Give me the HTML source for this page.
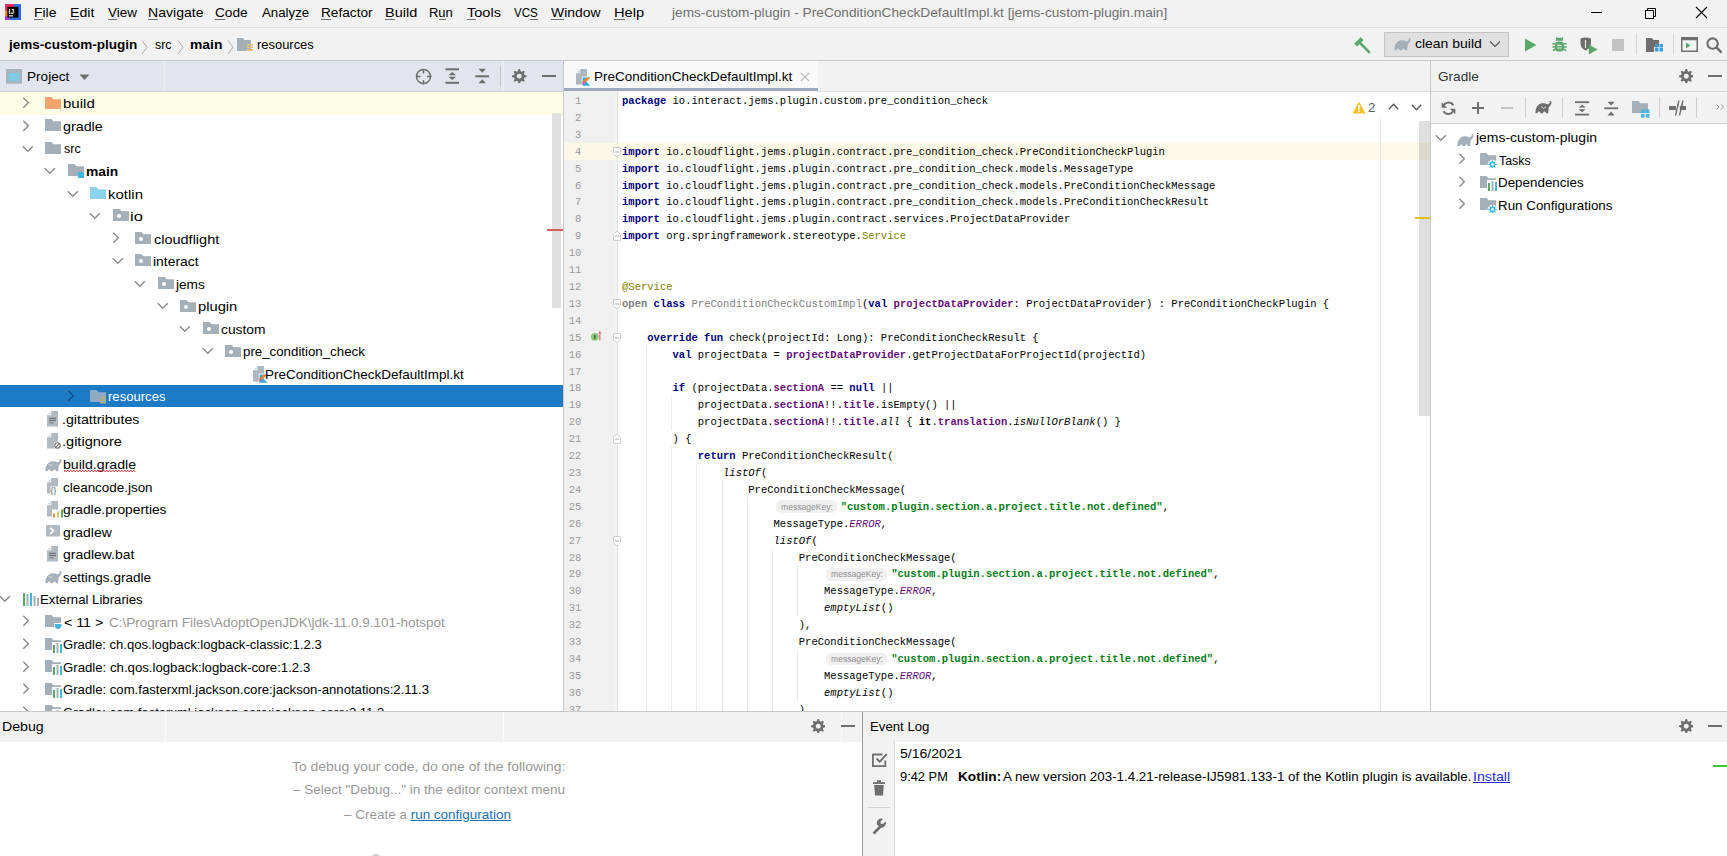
<!DOCTYPE html><html><head><meta charset="utf-8"><style>
html,body{margin:0;padding:0}
body{width:1727px;height:856px;overflow:hidden;position:relative;background:#f2f2f2;font-family:"Liberation Sans",sans-serif}
body div, body svg{position:absolute}
.t{white-space:pre}
.c{position:absolute;white-space:pre;font-family:"Liberation Mono",monospace;font-size:10.5px;line-height:10.5px;color:#000;letter-spacing:0.012px}
.kw{color:#000080;font-weight:bold}
.gr{color:#808080}
.pp{color:#660e7a;font-weight:bold}
.fl{color:#660e7a}
.an{color:#808000}
.st{color:#067d17;font-weight:bold}
.it{font-style:italic}
.en{color:#660e7a;font-style:italic}
.b{font-weight:bold}
</style></head><body>

<div style="left:0px;top:0px;width:1727px;height:27px;background:#f2f2f2;"></div>
<div style="left:0px;top:27px;width:1727px;height:1px;background:#dcdcdc;"></div>
<svg style="left:5px;top:4px" width="16" height="16" viewBox="0 0 16 16"><rect width="16" height="16" fill="#2f6ee8"/><path d="M0 0H9V4.5H4.5V11H0Z" fill="#ec2a5c"/><rect x="0" y="6.5" width="3" height="5.5" fill="#f5821f"/><path d="M0 12H3.5L5 16H0Z" fill="#b03ac6"/><rect x="2.4" y="2.8" width="11" height="10.8" fill="#000"/><text x="3.6" y="9.6" font-family="Liberation Sans" font-weight="bold" font-size="6.8" fill="#fff">IJ</text><rect x="3.8" y="11.2" width="4.2" height="1.3" fill="#ddd"/></svg>
<div class="t" style="left:34.45px;top:6.28px;font-size:13.6px;line-height:13.6px;color:#000;font-weight:normal;transform:scaleX(1.0250);transform-origin:0 0;">File</div>
<div style="left:34px;top:18.5px;width:9px;height:1.2px;background:#707070;"></div>
<div class="t" style="left:69.83px;top:6.28px;font-size:13.6px;line-height:13.6px;color:#000;font-weight:normal;transform:scaleX(1.0404);transform-origin:0 0;">Edit</div>
<div style="left:70px;top:18.5px;width:9px;height:1.2px;background:#707070;"></div>
<div class="t" style="left:107.73px;top:6.28px;font-size:13.6px;line-height:13.6px;color:#000;font-weight:normal;transform:scaleX(0.9895);transform-origin:0 0;">View</div>
<div style="left:108px;top:18.5px;width:9px;height:1.2px;background:#707070;"></div>
<div class="t" style="left:148.24px;top:6.28px;font-size:13.6px;line-height:13.6px;color:#000;font-weight:normal;transform:scaleX(1.0356);transform-origin:0 0;">Navigate</div>
<div style="left:148px;top:18.5px;width:10px;height:1.2px;background:#707070;"></div>
<div class="t" style="left:215.42px;top:6.28px;font-size:13.6px;line-height:13.6px;color:#000;font-weight:normal;transform:scaleX(1.0049);transform-origin:0 0;">Code</div>
<div style="left:215px;top:18.5px;width:10px;height:1.2px;background:#707070;"></div>
<div class="t" style="left:262.17px;top:6.28px;font-size:13.6px;line-height:13.6px;color:#000;font-weight:normal;transform:scaleX(0.9755);transform-origin:0 0;">Analyze</div>
<div style="left:295px;top:18.5px;width:7px;height:1.2px;background:#707070;"></div>
<div class="t" style="left:320.57px;top:6.28px;font-size:13.6px;line-height:13.6px;color:#000;font-weight:normal;transform:scaleX(1.0044);transform-origin:0 0;">Refactor</div>
<div style="left:321px;top:18.5px;width:10px;height:1.2px;background:#707070;"></div>
<div class="t" style="left:385.30px;top:6.28px;font-size:13.6px;line-height:13.6px;color:#000;font-weight:normal;transform:scaleX(1.0653);transform-origin:0 0;">Build</div>
<div style="left:385px;top:18.5px;width:10px;height:1.2px;background:#707070;"></div>
<div class="t" style="left:429.33px;top:6.28px;font-size:13.6px;line-height:13.6px;color:#000;font-weight:normal;transform:scaleX(0.9542);transform-origin:0 0;">Run</div>
<div style="left:439px;top:18.5px;width:7px;height:1.2px;background:#707070;"></div>
<div class="t" style="left:466.87px;top:6.28px;font-size:13.6px;line-height:13.6px;color:#000;font-weight:normal;transform:scaleX(1.0686);transform-origin:0 0;">Tools</div>
<div style="left:467px;top:18.5px;width:9px;height:1.2px;background:#707070;"></div>
<div class="t" style="left:513.74px;top:6.28px;font-size:13.6px;line-height:13.6px;color:#000;font-weight:normal;transform:scaleX(0.8498);transform-origin:0 0;">VCS</div>
<div style="left:530px;top:18.5px;width:8px;height:1.2px;background:#707070;"></div>
<div class="t" style="left:550.83px;top:6.28px;font-size:13.6px;line-height:13.6px;color:#000;font-weight:normal;transform:scaleX(1.0238);transform-origin:0 0;">Window</div>
<div style="left:551px;top:18.5px;width:13px;height:1.2px;background:#707070;"></div>
<div class="t" style="left:613.89px;top:6.28px;font-size:13.6px;line-height:13.6px;color:#000;font-weight:normal;transform:scaleX(1.0806);transform-origin:0 0;">Help</div>
<div style="left:614px;top:18.5px;width:11px;height:1.2px;background:#707070;"></div>
<div class="t" style="left:671.74px;top:6.28px;font-size:13.6px;line-height:13.6px;color:#6f6f6f;font-weight:normal;transform:scaleX(1.0053);transform-origin:0 0;">jems-custom-plugin - PreConditionCheckDefaultImpl.kt [jems-custom-plugin.main]</div>
<div style="left:1591px;top:12px;width:11px;height:1px;background:#000;"></div>
<svg style="left:1643px;top:6px" width="13" height="13" viewBox="0 0 13 13"><path d="M2.5 4.5h8v8h-8z M4.5 4.5v-2h8v8h-2" fill="none" stroke="#000" stroke-width="1"/></svg>
<svg style="left:1695px;top:6px" width="13" height="13" viewBox="0 0 13 13"><path d="M1 1L12 12M12 1L1 12" stroke="#000" stroke-width="1.1"/></svg>
<div style="left:0px;top:60px;width:1727px;height:1px;background:#c9c9c9;"></div>
<div class="t" style="left:8.90px;top:38.38px;font-size:13.6px;line-height:13.6px;color:#000;font-weight:bold;transform:scaleX(0.9939);transform-origin:0 0;">jems-custom-plugin</div>
<svg style="left:141px;top:39.5px" width="7" height="14.5" viewBox="0 0 7 14.5"><path d="M1 0.5L6 7.25L1 14.0" fill="none" stroke="#aaaaaa" stroke-width="1"/></svg>
<div class="t" style="left:154.56px;top:38.38px;font-size:13.6px;line-height:13.6px;color:#000;font-weight:normal;transform:scaleX(0.9152);transform-origin:0 0;">src</div>
<svg style="left:176.5px;top:39.5px" width="7" height="14.5" viewBox="0 0 7 14.5"><path d="M1 0.5L6 7.25L1 14.0" fill="none" stroke="#aaaaaa" stroke-width="1"/></svg>
<div class="t" style="left:189.60px;top:38.38px;font-size:13.6px;line-height:13.6px;color:#000;font-weight:bold;transform:scaleX(1.0193);transform-origin:0 0;">main</div>
<svg style="left:226.5px;top:39.5px" width="7" height="14.5" viewBox="0 0 7 14.5"><path d="M1 0.5L6 7.25L1 14.0" fill="none" stroke="#aaaaaa" stroke-width="1"/></svg>
<svg style="left:237px;top:38px" width="18" height="14" viewBox="0 0 18 14"><path d="M0 0h6l1.5 2H14v11H0z" fill="#a4afb7"/><path d="M10 6h6v1.5h-6zM10 8.5h6V10h-6zM10 11h6v2h-6z" fill="#e4c16a"/></svg>
<div class="t" style="left:256.86px;top:38.38px;font-size:13.6px;line-height:13.6px;color:#000;font-weight:normal;transform:scaleX(0.9513);transform-origin:0 0;">resources</div>
<svg style="left:1353.5px;top:36.5px" width="18" height="17" viewBox="0 0 18 17"><path d="M0.2 6.7L6.7 0.2L9.6 3.1L3.1 9.6Z" fill="#59a869"/><path d="M5.2 5.2L15.8 15.8" stroke="#59a869" stroke-width="2.6"/></svg>
<div style="left:1384px;top:32px;width:125px;height:25px;background:#e0e0e0;box-sizing:border-box;border:1px solid #c4c4c4;"></div>
<svg style="left:1394px;top:37.5px" width="17" height="13" viewBox="0 0 17 13"><path d="M0.5 12.3C0.3 8.5 1.5 4.2 5.5 2.8C8 2 10.5 2.3 12.5 3.5C13.5 2.8 14.8 2.2 15 1.2C15.1 0.6 14.5 0.4 14.1 0.8L13.6 0.5C14.2 -0.3 16.3 -0.2 16.5 1.3C16.6 3 15.2 5 13.8 6.3C13.5 8 13.3 10 13.2 12.3H11C10.8 11 10.2 10.4 9.5 10.4C8.8 10.4 8.2 11 8 12.3H5.5C5.3 11 4.7 10.4 4 10.4C3.3 10.4 2.7 11 2.5 12.3Z" fill="#a4afb7"/></svg>
<div class="t" style="left:1415.41px;top:37.38px;font-size:13.6px;line-height:13.6px;color:#000;font-weight:normal;transform:scaleX(1.0271);transform-origin:0 0;">clean build</div>
<svg style="left:1489px;top:40px" width="12" height="8" viewBox="0 0 12 8"><path d="M1 1.5L6 6.5L11 1.5" fill="none" stroke="#555" stroke-width="1.2"/></svg>
<svg style="left:1524px;top:38px" width="13" height="14" viewBox="0 0 13 14"><path d="M1 0.5L12.5 7L1 13.5z" fill="#59a869"/></svg>
<svg style="left:1552px;top:36.3px" width="15" height="17" viewBox="0 0 15 17"><path d="M4.2 1.5l1.6 1.6M10.8 1.5L9.2 3.1" stroke="#59a869" stroke-width="1.6"/><path d="M3.8 4.8A3.7 3 0 0 1 11.2 4.8z" fill="#59a869"/><rect x="2.8" y="5.6" width="9.4" height="10" rx="4" fill="#59a869"/><path d="M0.3 7.8h2.6M12.1 7.8h2.6M0.3 11h2.6M12.1 11h2.6M0.8 14.6l2.3-1.3M14.2 14.6l-2.3-1.3" stroke="#59a869" stroke-width="1.6"/><path d="M5.3 9.3h4.4M5.3 12h4.4" stroke="#f2f2f2" stroke-width="1.2"/></svg>
<svg style="left:1579.5px;top:36.5px" width="19" height="18" viewBox="0 0 19 18"><path d="M0.5 1.5Q5 -0.5 11 1.5V7Q10 11.5 5.5 13.5Q1 11.5 0.5 7z" fill="#6e6e6e"/><path d="M5.5 3v8" stroke="#f2f2f2" stroke-width="1.1"/><path d="M8.8 7.5l8.8 5-8.8 5z" fill="#59a869"/></svg>
<div style="left:1612px;top:39px;width:12px;height:12px;background:#c2c2c2;"></div>
<div style="left:1636px;top:33px;width:1px;height:22px;background:#d4d4d4;"></div>
<svg style="left:1646px;top:37px" width="18" height="16" viewBox="0 0 18 16"><path d="M0 1h6l1.5 2H13v7H8v5H0z" fill="#6e6e6e"/><rect x="9" y="11" width="3.5" height="3.5" fill="#389fd6"/><rect x="13.5" y="11" width="3.5" height="3.5" fill="#389fd6"/><rect x="9" y="7" width="3.5" height="3.5" fill="#389fd6"/><rect x="13.5" y="7" width="3.5" height="3.5" fill="#389fd6"/></svg>
<div style="left:1673px;top:33px;width:1px;height:22px;background:#d4d4d4;"></div>
<svg style="left:1681px;top:37px" width="17" height="15" viewBox="0 0 17 15"><rect x="0.75" y="0.75" width="15.5" height="13.5" fill="none" stroke="#6e6e6e" stroke-width="1.5"/><rect x="0.75" y="0.75" width="15.5" height="2.5" fill="#6e6e6e"/><path d="M5 5.5l4.5 3-4.5 3z" fill="#59a869"/></svg>
<svg style="left:1706.2px;top:36.8px" width="17" height="17" viewBox="0 0 17 17"><circle cx="6.6" cy="6.6" r="5.2" fill="none" stroke="#6e6e6e" stroke-width="2.1"/><path d="M10.4 10.4L15.6 15.6" stroke="#6e6e6e" stroke-width="2.4"/></svg>
<div style="left:0px;top:61px;width:563px;height:30px;background:#e3e5ee;"></div>
<div style="left:0px;top:91px;width:563px;height:1px;background:#d3d3d6;"></div>
<div style="left:164px;top:61px;width:1px;height:30px;background:#eceef3;"></div>
<div style="left:503px;top:61px;width:1px;height:30px;background:#eceef3;"></div>
<div style="left:564px;top:61px;width:866px;height:30px;background:#f2f2f2;"></div>
<div style="left:564px;top:61px;width:254px;height:27px;background:#f9f9f9;"></div>
<div style="left:564px;top:88px;width:254px;height:3px;background:#9ca8bc;"></div>
<div style="left:818px;top:91px;width:612px;height:1px;background:#dedede;"></div>
<div style="left:1431px;top:61px;width:296px;height:30px;background:#f2f2f2;"></div>
<div style="left:1431px;top:91px;width:296px;height:1px;background:#d8d8d8;"></div>
<svg style="left:6px;top:69.3px" width="16" height="15" viewBox="0 0 16 15"><rect x="0" y="0" width="16" height="14.7" fill="#a9b4bc"/><rect x="2.6" y="4" width="10.8" height="8.2" fill="#7fcbe6"/></svg>
<div class="t" style="left:26.78px;top:70.28px;font-size:13.6px;line-height:13.6px;color:#000;font-weight:normal;transform:scaleX(0.9999);transform-origin:0 0;">Project</div>
<svg style="left:79px;top:74px" width="11" height="7" viewBox="0 0 11 7"><path d="M0.5 0.5h10L5.5 6z" fill="#707070"/></svg>
<svg style="left:415px;top:68px" width="17" height="17" viewBox="0 0 17 17"><circle cx="8.5" cy="8.5" r="7" fill="none" stroke="#6e6e6e" stroke-width="1.5"/><path d="M8.5 1v4.5M8.5 12v4.5M1 8.5h4.5M12 8.5h4.5" stroke="#6e6e6e" stroke-width="1.5"/></svg>
<svg style="left:445px;top:68px" width="15" height="17" viewBox="0 0 15 17"><rect x="0.5" y="0.3" width="13.5" height="2" fill="#6e6e6e"/><rect x="0.5" y="13.8" width="13.5" height="2" fill="#6e6e6e"/><path d="M3.5 7.2L7.25 4 11 7.2zM3.5 8.8L7.25 12 11 8.8z" fill="#6e6e6e"/></svg>
<svg style="left:475px;top:68px" width="15" height="17" viewBox="0 0 15 17"><rect x="0.3" y="7.3" width="13.8" height="2" fill="#6e6e6e"/><path d="M3.5 0.8h7.5L7.25 4.8zM3.5 15.2h7.5L7.25 11.2z" fill="#6e6e6e"/></svg>
<div style="left:500px;top:66px;width:1px;height:21px;background:#c8c8c8;"></div>
<svg style="left:512px;top:68.8px" width="14.5" height="14.5" viewBox="0 0 14.5 14.5"><path d="M6.54 0.03 L7.96 0.03 L8.77 2.25 L9.71 2.65 L11.85 1.65 L12.85 2.65 L11.85 4.79 L12.25 5.73 L14.47 6.54 L14.47 7.96 L12.25 8.77 L11.85 9.71 L12.85 11.85 L11.85 12.85 L9.71 11.85 L8.77 12.25 L7.96 14.47 L6.54 14.47 L5.73 12.25 L4.79 11.85 L2.65 12.85 L1.65 11.85 L2.65 9.71 L2.25 8.77 L0.03 7.96 L0.03 6.54 L2.25 5.73 L2.65 4.79 L1.65 2.65 L2.65 1.65 L4.79 2.65 L5.73 2.25Z" fill="#6e6e6e"/><circle cx="7.25" cy="7.25" r="2.47" fill="#e3e5ee"/></svg>
<div style="left:542px;top:75px;width:14px;height:2px;background:#6e6e6e;"></div>
<svg style="left:576.2px;top:69px" width="16" height="18" viewBox="0 0 16 18"><path d="M4.3 0H11V15.5H0V4.3H4.3z" fill="#aeb7be"/><path d="M0.8 3.5L3.5 0.8V3.5z" fill="#c5ccd2"/><rect x="5.8" y="7.6" width="9.5" height="10" fill="#fff"/><path d="M6.6 8.4H14.2L10.4 12.4L14.2 16.8H6.6z" fill="#35a8e8"/><path d="M10.4 8.4H14.2L6.6 16.2V12.4z" fill="#f0852a"/><path d="M6.6 16.2L9 13.7 6.6 12.4z" fill="#c757bc"/></svg>
<div class="t" style="left:594.39px;top:70.28px;font-size:13.6px;line-height:13.6px;color:#000;font-weight:normal;transform:scaleX(0.9904);transform-origin:0 0;">PreConditionCheckDefaultImpl.kt</div>
<svg style="left:799.5px;top:71.5px" width="10" height="10" viewBox="0 0 10 10"><path d="M0.8 0.8L9.2 9.2M9.2 0.8L0.8 9.2" stroke="#b8b8b8" stroke-width="1.2"/></svg>
<div style="left:1430px;top:61px;width:1px;height:650px;background:#c9c9c9;"></div>
<div class="t" style="left:1437.72px;top:70.18px;font-size:13.6px;line-height:13.6px;color:#333;font-weight:normal;transform:scaleX(1.0015);transform-origin:0 0;">Gradle</div>

<div style="left:0px;top:92px;width:563px;height:619px;background:#ffffff;"></div>
<div style="left:0px;top:92.0px;width:563px;height:22.54px;background:#fefee6;"></div>
<svg style="left:22.099999999999998px;top:97.0px" width="8" height="12" viewBox="0 0 8 12"><path d="M1.3 0.8L6.3 5.8L1.3 10.8" fill="none" stroke="#8c8c8c" stroke-width="1.5"/></svg>
<svg style="left:45.0px;top:96.7px" width="18" height="15" viewBox="0 0 18 15"><path d="M0 0h6.5l2 2.3H16V12H0z" fill="#f4a46f"/></svg>
<div class="t" style="left:62.92px;top:97.38px;font-size:13.6px;line-height:13.6px;color:#000000;font-weight:normal;transform:scaleX(1.1076);transform-origin:0 0;">build</div>
<svg style="left:22.099999999999998px;top:119.53999999999999px" width="8" height="12" viewBox="0 0 8 12"><path d="M1.3 0.8L6.3 5.8L1.3 10.8" fill="none" stroke="#8c8c8c" stroke-width="1.5"/></svg>
<svg style="left:45.0px;top:119.24px" width="18" height="15" viewBox="0 0 18 15"><path d="M0 0h6.5l2 2.3H16V12H0z" fill="#a4afb7"/></svg>
<div class="t" style="left:63.29px;top:119.92px;font-size:13.6px;line-height:13.6px;color:#000000;font-weight:normal;transform:scaleX(1.0514);transform-origin:0 0;">gradle</div>
<svg style="left:21.9px;top:144.57999999999998px" width="12" height="8" viewBox="0 0 12 8"><path d="M0.8 1.3L5.8 6.3L10.8 1.3" fill="none" stroke="#8c8c8c" stroke-width="1.5"/></svg>
<svg style="left:45.0px;top:141.77999999999997px" width="18" height="15" viewBox="0 0 18 15"><path d="M0 0h6.5l2 2.3H16V12H0z" fill="#a4afb7"/></svg>
<div class="t" style="left:63.55px;top:142.46px;font-size:13.6px;line-height:13.6px;color:#000000;font-weight:normal;transform:scaleX(0.9267);transform-origin:0 0;">src</div>
<svg style="left:44.4px;top:167.12px" width="12" height="8" viewBox="0 0 12 8"><path d="M0.8 1.3L5.8 6.3L10.8 1.3" fill="none" stroke="#8c8c8c" stroke-width="1.5"/></svg>
<svg style="left:67.5px;top:164.32px" width="18" height="15" viewBox="0 0 18 15"><path d="M0 0h6.5l2 2.3H16V12H0z" fill="#a4afb7"/><rect x="10" y="8" width="6" height="6" fill="#40b6e0"/></svg>
<div class="t" style="left:86.00px;top:165.00px;font-size:13.6px;line-height:13.6px;color:#000000;font-weight:bold;transform:scaleX(1.0159);transform-origin:0 0;">main</div>
<svg style="left:66.9px;top:189.66px" width="12" height="8" viewBox="0 0 12 8"><path d="M0.8 1.3L5.8 6.3L10.8 1.3" fill="none" stroke="#8c8c8c" stroke-width="1.5"/></svg>
<svg style="left:90.0px;top:186.85999999999999px" width="18" height="15" viewBox="0 0 18 15"><path d="M0 0h6.5l2 2.3H16V12H0z" fill="#8ed3ee"/></svg>
<div class="t" style="left:107.99px;top:187.54px;font-size:13.6px;line-height:13.6px;color:#000000;font-weight:normal;transform:scaleX(1.1017);transform-origin:0 0;">kotlin</div>
<svg style="left:89.4px;top:212.2px" width="12" height="8" viewBox="0 0 12 8"><path d="M0.8 1.3L5.8 6.3L10.8 1.3" fill="none" stroke="#8c8c8c" stroke-width="1.5"/></svg>
<svg style="left:112.5px;top:209.39999999999998px" width="18" height="15" viewBox="0 0 18 15"><path d="M0 0h6.5l2 2.3H16V12H0z" fill="#a4afb7"/><circle cx="6" cy="7" r="2" fill="#fff"/></svg>
<div class="t" style="left:130.29px;top:210.08px;font-size:13.6px;line-height:13.6px;color:#000000;font-weight:normal;transform:scaleX(1.2072);transform-origin:0 0;">io</div>
<svg style="left:112.10000000000001px;top:232.24px" width="8" height="12" viewBox="0 0 8 12"><path d="M1.3 0.8L6.3 5.8L1.3 10.8" fill="none" stroke="#8c8c8c" stroke-width="1.5"/></svg>
<svg style="left:135.0px;top:231.94px" width="18" height="15" viewBox="0 0 18 15"><path d="M0 0h6.5l2 2.3H16V12H0z" fill="#a4afb7"/><circle cx="6" cy="7" r="2" fill="#fff"/></svg>
<div class="t" style="left:153.58px;top:232.62px;font-size:13.6px;line-height:13.6px;color:#000000;font-weight:normal;transform:scaleX(1.0652);transform-origin:0 0;">cloudflight</div>
<svg style="left:111.9px;top:257.28px" width="12" height="8" viewBox="0 0 12 8"><path d="M0.8 1.3L5.8 6.3L10.8 1.3" fill="none" stroke="#8c8c8c" stroke-width="1.5"/></svg>
<svg style="left:135.0px;top:254.48px" width="18" height="15" viewBox="0 0 18 15"><path d="M0 0h6.5l2 2.3H16V12H0z" fill="#a4afb7"/><circle cx="6" cy="7" r="2" fill="#fff"/></svg>
<div class="t" style="left:153.26px;top:255.16px;font-size:13.6px;line-height:13.6px;color:#000000;font-weight:normal;transform:scaleX(1.0209);transform-origin:0 0;">interact</div>
<svg style="left:134.4px;top:279.82px" width="12" height="8" viewBox="0 0 12 8"><path d="M0.8 1.3L5.8 6.3L10.8 1.3" fill="none" stroke="#8c8c8c" stroke-width="1.5"/></svg>
<svg style="left:157.5px;top:277.02px" width="18" height="15" viewBox="0 0 18 15"><path d="M0 0h6.5l2 2.3H16V12H0z" fill="#a4afb7"/><circle cx="6" cy="7" r="2" fill="#fff"/></svg>
<div class="t" style="left:176.34px;top:277.70px;font-size:13.6px;line-height:13.6px;color:#000000;font-weight:normal;transform:scaleX(1.0037);transform-origin:0 0;">jems</div>
<svg style="left:156.9px;top:302.36px" width="12" height="8" viewBox="0 0 12 8"><path d="M0.8 1.3L5.8 6.3L10.8 1.3" fill="none" stroke="#8c8c8c" stroke-width="1.5"/></svg>
<svg style="left:180.0px;top:299.56px" width="18" height="15" viewBox="0 0 18 15"><path d="M0 0h6.5l2 2.3H16V12H0z" fill="#a4afb7"/><circle cx="6" cy="7" r="2" fill="#fff"/></svg>
<div class="t" style="left:198.04px;top:300.24px;font-size:13.6px;line-height:13.6px;color:#000000;font-weight:normal;transform:scaleX(1.0827);transform-origin:0 0;">plugin</div>
<svg style="left:179.4px;top:324.9px" width="12" height="8" viewBox="0 0 12 8"><path d="M0.8 1.3L5.8 6.3L10.8 1.3" fill="none" stroke="#8c8c8c" stroke-width="1.5"/></svg>
<svg style="left:202.5px;top:322.09999999999997px" width="18" height="15" viewBox="0 0 18 15"><path d="M0 0h6.5l2 2.3H16V12H0z" fill="#a4afb7"/><circle cx="6" cy="7" r="2" fill="#fff"/></svg>
<div class="t" style="left:220.91px;top:322.78px;font-size:13.6px;line-height:13.6px;color:#000000;font-weight:normal;transform:scaleX(1.0150);transform-origin:0 0;">custom</div>
<svg style="left:201.9px;top:347.44px" width="12" height="8" viewBox="0 0 12 8"><path d="M0.8 1.3L5.8 6.3L10.8 1.3" fill="none" stroke="#8c8c8c" stroke-width="1.5"/></svg>
<svg style="left:225.0px;top:344.64px" width="18" height="15" viewBox="0 0 18 15"><path d="M0 0h6.5l2 2.3H16V12H0z" fill="#a4afb7"/><circle cx="6" cy="7" r="2" fill="#fff"/></svg>
<div class="t" style="left:243.14px;top:345.32px;font-size:13.6px;line-height:13.6px;color:#000000;font-weight:normal;transform:scaleX(0.9769);transform-origin:0 0;">pre_condition_check</div>
<svg style="left:252.7px;top:365.88px" width="16" height="18" viewBox="0 0 16 18"><path d="M4.3 0H11V15.5H0V4.3H4.3z" fill="#aeb7be"/><path d="M0.8 3.5L3.5 0.8V3.5z" fill="#c5ccd2"/><rect x="5.8" y="7.6" width="9.5" height="10" fill="#fff"/><path d="M6.6 8.4H14.2L10.4 12.4L14.2 16.8H6.6z" fill="#35a8e8"/><path d="M10.4 8.4H14.2L6.6 16.2V12.4z" fill="#f0852a"/><path d="M6.6 16.2L9 13.7 6.6 12.4z" fill="#c757bc"/></svg>
<div class="t" style="left:265.29px;top:367.86px;font-size:13.6px;line-height:13.6px;color:#000000;font-weight:normal;transform:scaleX(0.9924);transform-origin:0 0;">PreConditionCheckDefaultImpl.kt</div>
<div style="left:0px;top:385px;width:563px;height:22px;background:#1d7bc5;"></div>
<svg style="left:67.10000000000001px;top:390.02px" width="8" height="12" viewBox="0 0 8 12"><path d="M1.3 0.8L6.3 5.8L1.3 10.8" fill="none" stroke="#0d4f8c" stroke-width="1.5"/></svg>
<svg style="left:90.0px;top:389.71999999999997px" width="18" height="15" viewBox="0 0 18 15"><path d="M0 0h6.5l2 2.3H16V12H0z" fill="#8ea9c3"/><path d="M10 7h6v1.5h-6zM10 9.5h6V11h-6zM10 12h6v1.5h-6z" fill="#b3b27a"/></svg>
<div class="t" style="left:108.45px;top:390.40px;font-size:13.6px;line-height:13.6px;color:#ffffff;font-weight:normal;transform:scaleX(0.9633);transform-origin:0 0;">resources</div>
<svg style="left:47.2px;top:410.76px" width="12" height="16" viewBox="0 0 12 16"><path d="M4.3 0H11V15.5H0V4.3H4.3z" fill="#b1bac1"/><path d="M0.8 3.5L3.5 0.8V3.5z" fill="#c5ccd2"/><path d="M2 7.3h7M2 9.4h7" stroke="#5f6366" stroke-width="1"/><path d="M2 11.8h4.5" stroke="#7a7f84" stroke-width="1.2"/></svg>
<div class="t" style="left:62.32px;top:412.94px;font-size:13.6px;line-height:13.6px;color:#000000;font-weight:normal;transform:scaleX(1.0458);transform-origin:0 0;">.gitattributes</div>
<svg style="left:47.2px;top:433.29999999999995px" width="16" height="17" viewBox="0 0 16 17"><path d="M4.3 0H11V15.5H0V4.3H4.3z" fill="#b1bac1"/><path d="M0.8 3.5L3.5 0.8V3.5z" fill="#c5ccd2"/><circle cx="10.5" cy="12.5" r="3.8" fill="#fff"/><circle cx="10.5" cy="12.5" r="2.7" fill="none" stroke="#6e6e6e" stroke-width="1.1"/><path d="M8.7 14.3L12.3 10.7" stroke="#6e6e6e" stroke-width="1.1"/></svg>
<div class="t" style="left:62.29px;top:435.48px;font-size:13.6px;line-height:13.6px;color:#000000;font-weight:normal;transform:scaleX(1.0697);transform-origin:0 0;">.gitignore</div>
<svg style="left:44.7px;top:458.53999999999996px" width="17" height="13" viewBox="0 0 17 13"><path d="M0.5 12.3C0.3 8.5 1.5 4.2 5.5 2.8C8 2 10.5 2.3 12.5 3.5C13.5 2.8 14.8 2.2 15 1.2C15.1 0.6 14.5 0.4 14.1 0.8L13.6 0.5C14.2 -0.3 16.3 -0.2 16.5 1.3C16.6 3 15.2 5 13.8 6.3C13.5 8 13.3 10 13.2 12.3H11C10.8 11 10.2 10.4 9.5 10.4C8.8 10.4 8.2 11 8 12.3H5.5C5.3 11 4.7 10.4 4 10.4C3.3 10.4 2.7 11 2.5 12.3Z" fill="#a7b1b9"/><path d="M3.8 5.8Q5 6.8 7 5.8" fill="none" stroke="#fff" stroke-width="0.7"/></svg>
<div class="t" style="left:62.98px;top:458.02px;font-size:13.6px;line-height:13.6px;color:#000000;font-weight:normal;transform:scaleX(1.0399);transform-origin:0 0;">build.gradle</div>
<svg style="left:63.5px;top:469.44px" width="72" height="4" viewBox="0 0 72 4"><path d="M0 3 L0.75 1 L2.25 3 L3.75 1 L5.25 3 L6.75 1 L8.25 3 L9.75 1 L11.25 3 L12.75 1 L14.25 3 L15.75 1 L17.25 3 L18.75 1 L20.25 3 L21.75 1 L23.25 3 L24.75 1 L26.25 3 L27.75 1 L29.25 3 L30.75 1 L32.25 3 L33.75 1 L35.25 3 L36.75 1 L38.25 3 L39.75 1 L41.25 3 L42.75 1 L44.25 3 L45.75 1 L47.25 3 L48.75 1 L50.25 3 L51.75 1 L53.25 3 L54.75 1 L56.25 3 L57.75 1 L59.25 3 L60.75 1 L62.25 3 L63.75 1 L65.25 3 L66.75 1 L68.25 3 L69.75 1 L71.25 3" fill="none" stroke="#e0383e" stroke-width="0.9"/></svg>
<svg style="left:47.2px;top:478.38px" width="16" height="17" viewBox="0 0 16 17"><path d="M4.3 0H11V15.5H0V4.3H4.3z" fill="#b1bac1"/><path d="M0.8 3.5L3.5 0.8V3.5z" fill="#c5ccd2"/><rect x="3.5" y="8.5" width="10" height="8.5" fill="#fff"/><text x="3.6" y="15.6" font-family="Liberation Sans" font-size="8.5" fill="#5a5a5a">{}</text></svg>
<div class="t" style="left:63.03px;top:480.56px;font-size:13.6px;line-height:13.6px;color:#000000;font-weight:normal;transform:scaleX(0.9879);transform-origin:0 0;">cleancode.json</div>
<svg style="left:47.2px;top:500.91999999999996px" width="17" height="17" viewBox="0 0 17 17"><path d="M4.3 0H11V15.5H0V4.3H4.3z" fill="#b1bac1"/><path d="M0.8 3.5L3.5 0.8V3.5z" fill="#c5ccd2"/><rect x="5" y="8.5" width="12" height="8.5" fill="#fff"/><rect x="6" y="12.5" width="2" height="4" fill="#f98b3c"/><rect x="10" y="10.5" width="2" height="6" fill="#e4c16a"/><rect x="14" y="8.5" width="2" height="8" fill="#59a869"/></svg>
<div class="t" style="left:63.31px;top:503.10px;font-size:13.6px;line-height:13.6px;color:#000000;font-weight:normal;transform:scaleX(1.0147);transform-origin:0 0;">gradle.properties</div>
<svg style="left:45.8px;top:525.26px" width="15" height="12" viewBox="0 0 15 12"><rect x="0" y="0" width="14" height="11.5" rx="0.8" fill="#b1bac1"/><path d="M4.2 2.8L7.4 5.8L4.2 8.8" fill="none" stroke="#fff" stroke-width="1.6"/></svg>
<div class="t" style="left:63.31px;top:525.64px;font-size:13.6px;line-height:13.6px;color:#000000;font-weight:normal;transform:scaleX(1.0236);transform-origin:0 0;">gradlew</div>
<svg style="left:47.2px;top:546.0px" width="12" height="16" viewBox="0 0 12 16"><path d="M4.3 0H11V15.5H0V4.3H4.3z" fill="#b1bac1"/><path d="M0.8 3.5L3.5 0.8V3.5z" fill="#c5ccd2"/><path d="M2 7.3h7M2 9.4h7" stroke="#5f6366" stroke-width="1"/><path d="M2 11.8h4.5" stroke="#7a7f84" stroke-width="1.2"/></svg>
<div class="t" style="left:63.31px;top:548.18px;font-size:13.6px;line-height:13.6px;color:#000000;font-weight:normal;transform:scaleX(1.0264);transform-origin:0 0;">gradlew.bat</div>
<svg style="left:44.7px;top:571.24px" width="17" height="13" viewBox="0 0 17 13"><path d="M0.5 12.3C0.3 8.5 1.5 4.2 5.5 2.8C8 2 10.5 2.3 12.5 3.5C13.5 2.8 14.8 2.2 15 1.2C15.1 0.6 14.5 0.4 14.1 0.8L13.6 0.5C14.2 -0.3 16.3 -0.2 16.5 1.3C16.6 3 15.2 5 13.8 6.3C13.5 8 13.3 10 13.2 12.3H11C10.8 11 10.2 10.4 9.5 10.4C8.8 10.4 8.2 11 8 12.3H5.5C5.3 11 4.7 10.4 4 10.4C3.3 10.4 2.7 11 2.5 12.3Z" fill="#a7b1b9"/><path d="M3.8 5.8Q5 6.8 7 5.8" fill="none" stroke="#fff" stroke-width="0.7"/></svg>
<div class="t" style="left:63.03px;top:570.72px;font-size:13.6px;line-height:13.6px;color:#000000;font-weight:normal;transform:scaleX(0.9956);transform-origin:0 0;">settings.gradle</div>
<svg style="left:-0.6000000000000014px;top:595.38px" width="12" height="8" viewBox="0 0 12 8"><path d="M0.8 1.3L5.8 6.3L10.8 1.3" fill="none" stroke="#8c8c8c" stroke-width="1.5"/></svg>
<svg style="left:22.5px;top:592.58px" width="17" height="14" viewBox="0 0 17 14"><rect x="0" y="0" width="2" height="13" fill="#59a869"/><rect x="3.5" y="1" width="2" height="12" fill="#a4afb7"/><rect x="7" y="0" width="2" height="13" fill="#40b6e0"/><rect x="10.5" y="3" width="2" height="10" fill="#a4afb7"/><rect x="14" y="5" width="2" height="8" fill="#a4afb7"/></svg>
<div class="t" style="left:40.21px;top:593.26px;font-size:13.6px;line-height:13.6px;color:#000000;font-weight:normal;transform:scaleX(0.9708);transform-origin:0 0;">External Libraries</div>
<svg style="left:22.099999999999998px;top:615.42px" width="8" height="12" viewBox="0 0 8 12"><path d="M1.3 0.8L6.3 5.8L1.3 10.8" fill="none" stroke="#8c8c8c" stroke-width="1.5"/></svg>
<svg style="left:45.0px;top:615.12px" width="18" height="15" viewBox="0 0 18 15"><path d="M0 0h6.5l2 2.3H16V12H0z" fill="#a4afb7"/><rect x="9" y="8" width="9" height="7" fill="#fff"/><path d="M9.5 9h7c0 3-1.5 5-3.5 5s-3.5-2-3.5-5z" fill="#40b6e0"/></svg>
<div class="t" style="left:63.99px;top:615.80px;font-size:13.6px;line-height:13.6px;color:#000000;font-weight:normal;transform:scaleX(1.0467);transform-origin:0 0;">&lt; 11 &gt;</div>
<div class="t" style="left:108.53px;top:615.80px;font-size:13.6px;line-height:13.6px;color:#999999;font-weight:normal;transform:scaleX(0.9925);transform-origin:0 0;">C:\Program Files\AdoptOpenJDK\jdk-11.0.9.101-hotspot</div>
<svg style="left:22.099999999999998px;top:637.96px" width="8" height="12" viewBox="0 0 8 12"><path d="M1.3 0.8L6.3 5.8L1.3 10.8" fill="none" stroke="#8c8c8c" stroke-width="1.5"/></svg>
<svg style="left:45.0px;top:637.6600000000001px" width="18" height="15" viewBox="0 0 18 15"><path d="M0 0h6.5l2 2.3H16V12H0z" fill="#a4afb7"/><rect x="7" y="4" width="11" height="11" fill="#fff"/><rect x="8" y="7" width="2" height="8" fill="#59a869"/><rect x="11.5" y="5" width="2" height="10" fill="#a4afb7"/><rect x="15" y="6" width="2" height="9" fill="#40b6e0"/></svg>
<div class="t" style="left:62.75px;top:638.34px;font-size:13.6px;line-height:13.6px;color:#000000;font-weight:normal;transform:scaleX(0.9617);transform-origin:0 0;">Gradle: ch.qos.logback:logback-classic:1.2.3</div>
<svg style="left:22.099999999999998px;top:660.5px" width="8" height="12" viewBox="0 0 8 12"><path d="M1.3 0.8L6.3 5.8L1.3 10.8" fill="none" stroke="#8c8c8c" stroke-width="1.5"/></svg>
<svg style="left:45.0px;top:660.2px" width="18" height="15" viewBox="0 0 18 15"><path d="M0 0h6.5l2 2.3H16V12H0z" fill="#a4afb7"/><rect x="7" y="4" width="11" height="11" fill="#fff"/><rect x="8" y="7" width="2" height="8" fill="#59a869"/><rect x="11.5" y="5" width="2" height="10" fill="#a4afb7"/><rect x="15" y="6" width="2" height="9" fill="#40b6e0"/></svg>
<div class="t" style="left:62.74px;top:660.88px;font-size:13.6px;line-height:13.6px;color:#000000;font-weight:normal;transform:scaleX(0.9708);transform-origin:0 0;">Gradle: ch.qos.logback:logback-core:1.2.3</div>
<svg style="left:22.099999999999998px;top:683.04px" width="8" height="12" viewBox="0 0 8 12"><path d="M1.3 0.8L6.3 5.8L1.3 10.8" fill="none" stroke="#8c8c8c" stroke-width="1.5"/></svg>
<svg style="left:45.0px;top:682.74px" width="18" height="15" viewBox="0 0 18 15"><path d="M0 0h6.5l2 2.3H16V12H0z" fill="#a4afb7"/><rect x="7" y="4" width="11" height="11" fill="#fff"/><rect x="8" y="7" width="2" height="8" fill="#59a869"/><rect x="11.5" y="5" width="2" height="10" fill="#a4afb7"/><rect x="15" y="6" width="2" height="9" fill="#40b6e0"/></svg>
<div class="t" style="left:62.74px;top:683.42px;font-size:13.6px;line-height:13.6px;color:#000000;font-weight:normal;transform:scaleX(0.9674);transform-origin:0 0;">Gradle: com.fasterxml.jackson.core:jackson-annotations:2.11.3</div>
<svg style="left:22.099999999999998px;top:705.5799999999999px" width="8" height="12" viewBox="0 0 8 12"><path d="M1.3 0.8L6.3 5.8L1.3 10.8" fill="none" stroke="#8c8c8c" stroke-width="1.5"/></svg>
<svg style="left:45.0px;top:705.28px" width="18" height="15" viewBox="0 0 18 15"><path d="M0 0h6.5l2 2.3H16V12H0z" fill="#a4afb7"/><rect x="7" y="4" width="11" height="11" fill="#fff"/><rect x="8" y="7" width="2" height="8" fill="#59a869"/><rect x="11.5" y="5" width="2" height="10" fill="#a4afb7"/><rect x="15" y="6" width="2" height="9" fill="#40b6e0"/></svg>
<div class="t" style="left:62.75px;top:705.96px;font-size:13.6px;line-height:13.6px;color:#000000;font-weight:normal;transform:scaleX(0.9606);transform-origin:0 0;">Gradle: com.fasterxml.jackson.core:jackson-core:2.11.3</div>
<div style="left:552px;top:113.3px;width:9px;height:194.5px;background:#e0e0e0;"></div>
<div style="left:547px;top:228.5px;width:16px;height:2px;background:#d65c5c;"></div>
<div style="left:563px;top:61px;width:1px;height:650px;background:#c9c9c9;"></div>
<div style="left:564px;top:92px;width:53px;height:619px;background:#f0f0f0;"></div>
<div style="left:615px;top:92px;width:2px;height:619px;background:#f3f3f3;"></div>
<div style="left:617px;top:92px;width:1px;height:619px;background:#e2e2e2;"></div>
<div style="left:618px;top:92px;width:812px;height:619px;background:#ffffff;"></div>
<div style="left:564px;top:142.73000000000002px;width:51px;height:17px;background:#fcf8e6;"></div>
<div style="left:615px;top:142.73000000000002px;width:2px;height:17px;background:#fcf8e6;"></div>
<div style="left:618px;top:142.73000000000002px;width:812px;height:17px;background:#fef9e7;"></div>
<div style="left:1380px;top:119px;width:1px;height:592px;background:#e8e8e8;"></div>
<div style="left:646px;top:345.45px;width:1px;height:372.01000000000005px;background:#ebebeb;"></div>
<div style="left:671px;top:396.18px;width:1px;height:33.81px;background:#ebebeb;"></div>
<div style="left:671px;top:446.91px;width:1px;height:270.55px;background:#ebebeb;"></div>
<div style="left:696px;top:463.82px;width:1px;height:253.64000000000004px;background:#ebebeb;"></div>
<div style="left:722px;top:480.73px;width:1px;height:236.73000000000002px;background:#ebebeb;"></div>
<div style="left:747px;top:497.64000000000004px;width:1px;height:219.82px;background:#ebebeb;"></div>
<div style="left:772px;top:548.3699999999999px;width:1px;height:169.09000000000015px;background:#ebebeb;"></div>
<div style="left:797px;top:565.28px;width:1px;height:50.72000000000003px;background:#ebebeb;"></div>
<div style="left:797px;top:649.8299999999999px;width:1px;height:50.72000000000014px;background:#ebebeb;"></div>
<div class="c" style="left:574.99px;top:95.96px;color:#999999">1</div>
<div class="c" style="left:622.0px;top:95.96px"><span class="kw">package</span> io.interact.jems.plugin.custom.pre_condition_check</div>
<div class="c" style="left:574.99px;top:112.87px;color:#999999">2</div>
<div class="c" style="left:574.99px;top:129.78px;color:#999999">3</div>
<div class="c" style="left:574.99px;top:146.69px;color:#999999">4</div>
<div class="c" style="left:622.0px;top:146.69px"><span class="kw">import</span> io.cloudflight.jems.plugin.contract.pre_condition_check.PreConditionCheckPlugin</div>
<div class="c" style="left:574.99px;top:163.60px;color:#999999">5</div>
<div class="c" style="left:622.0px;top:163.60px"><span class="kw">import</span> io.cloudflight.jems.plugin.contract.pre_condition_check.models.MessageType</div>
<div class="c" style="left:574.99px;top:180.51px;color:#999999">6</div>
<div class="c" style="left:622.0px;top:180.51px"><span class="kw">import</span> io.cloudflight.jems.plugin.contract.pre_condition_check.models.PreConditionCheckMessage</div>
<div class="c" style="left:574.99px;top:197.42px;color:#999999">7</div>
<div class="c" style="left:622.0px;top:197.42px"><span class="kw">import</span> io.cloudflight.jems.plugin.contract.pre_condition_check.models.PreConditionCheckResult</div>
<div class="c" style="left:574.99px;top:214.33px;color:#999999">8</div>
<div class="c" style="left:622.0px;top:214.33px"><span class="kw">import</span> io.cloudflight.jems.plugin.contract.services.ProjectDataProvider</div>
<div class="c" style="left:574.99px;top:231.24px;color:#999999">9</div>
<div class="c" style="left:622.0px;top:231.24px"><span class="kw">import</span> org.springframework.stereotype.<span class="an">Service</span></div>
<div class="c" style="left:568.67px;top:248.15px;color:#999999">10</div>
<div class="c" style="left:568.67px;top:265.06px;color:#999999">11</div>
<div class="c" style="left:568.67px;top:281.97px;color:#999999">12</div>
<div class="c" style="left:622.0px;top:281.97px"><span class="an">@Service</span></div>
<div class="c" style="left:568.67px;top:298.88px;color:#999999">13</div>
<div class="c" style="left:622.0px;top:298.88px"><span class="gr b">open</span> <span class="kw">class</span> <span class="gr">PreConditionCheckCustomImpl</span>(<span class="kw">val</span> <span class="pp">projectDataProvider</span>: ProjectDataProvider) : PreConditionCheckPlugin {</div>
<div class="c" style="left:568.67px;top:315.79px;color:#999999">14</div>
<div class="c" style="left:568.67px;top:332.70px;color:#999999">15</div>
<div class="c" style="left:622.0px;top:332.70px">    <span class="kw">override fun</span> check(projectId: Long): PreConditionCheckResult {</div>
<div class="c" style="left:568.67px;top:349.61px;color:#999999">16</div>
<div class="c" style="left:622.0px;top:349.61px">        <span class="kw">val</span> projectData = <span class="pp">projectDataProvider</span>.getProjectDataForProjectId(projectId)</div>
<div class="c" style="left:568.67px;top:366.52px;color:#999999">17</div>
<div class="c" style="left:568.67px;top:383.43px;color:#999999">18</div>
<div class="c" style="left:622.0px;top:383.43px">        <span class="kw">if</span> (projectData.<span class="pp">sectionA</span> == <span class="kw">null</span> ||</div>
<div class="c" style="left:568.67px;top:400.34px;color:#999999">19</div>
<div class="c" style="left:622.0px;top:400.34px">            projectData.<span class="pp">sectionA</span>!!.<span class="pp">title</span>.isEmpty() ||</div>
<div class="c" style="left:568.67px;top:417.25px;color:#999999">20</div>
<div class="c" style="left:622.0px;top:417.25px">            projectData.<span class="pp">sectionA</span>!!.<span class="pp">title</span>.<span class="it">all</span> { <span class="b">it</span>.<span class="pp">translation</span>.<span class="it">isNullOrBlank</span>() }</div>
<div class="c" style="left:568.67px;top:434.16px;color:#999999">21</div>
<div class="c" style="left:622.0px;top:434.16px">        ) {</div>
<div class="c" style="left:568.67px;top:451.07px;color:#999999">22</div>
<div class="c" style="left:622.0px;top:451.07px">            <span class="kw">return</span> PreConditionCheckResult(</div>
<div class="c" style="left:568.67px;top:467.98px;color:#999999">23</div>
<div class="c" style="left:622.0px;top:467.98px">                <span class="it">listOf</span>(</div>
<div class="c" style="left:568.67px;top:484.89px;color:#999999">24</div>
<div class="c" style="left:622.0px;top:484.89px">                    PreConditionCheckMessage(</div>
<div class="c" style="left:568.67px;top:501.80px;color:#999999">25</div>
<div style="left:775.512px;top:500.34000000000003px;width:61px;height:12.6px;background:#f0f0f0;border-radius:5px;"></div>
<div class="t" style="left:780.53px;top:502.65px;font-size:9.2px;line-height:9.2px;color:#8e8e8e;font-weight:normal;transform:scaleX(0.9340);transform-origin:0 0;">messageKey:</div>
<div class="c" style="left:622.0px;top:501.80px">                        <span style="display:inline-block;width:67.2px;height:0"></span><span class="st">"custom.plugin.section.a.project.title.not.defined"</span>,</div>
<div class="c" style="left:568.67px;top:518.71px;color:#999999">26</div>
<div class="c" style="left:622.0px;top:518.71px">                        MessageType.<span class="en">ERROR</span>,</div>
<div class="c" style="left:568.67px;top:535.62px;color:#999999">27</div>
<div class="c" style="left:622.0px;top:535.62px">                        <span class="it">listOf</span>(</div>
<div class="c" style="left:568.67px;top:552.53px;color:#999999">28</div>
<div class="c" style="left:622.0px;top:552.53px">                            PreConditionCheckMessage(</div>
<div class="c" style="left:568.67px;top:569.44px;color:#999999">29</div>
<div style="left:826.016px;top:567.98px;width:61px;height:12.6px;background:#f0f0f0;border-radius:5px;"></div>
<div class="t" style="left:831.04px;top:570.29px;font-size:9.2px;line-height:9.2px;color:#8e8e8e;font-weight:normal;transform:scaleX(0.9340);transform-origin:0 0;">messageKey:</div>
<div class="c" style="left:622.0px;top:569.44px">                                <span style="display:inline-block;width:67.2px;height:0"></span><span class="st">"custom.plugin.section.a.project.title.not.defined"</span>,</div>
<div class="c" style="left:568.67px;top:586.35px;color:#999999">30</div>
<div class="c" style="left:622.0px;top:586.35px">                                MessageType.<span class="en">ERROR</span>,</div>
<div class="c" style="left:568.67px;top:603.26px;color:#999999">31</div>
<div class="c" style="left:622.0px;top:603.26px">                                <span class="it">emptyList</span>()</div>
<div class="c" style="left:568.67px;top:620.17px;color:#999999">32</div>
<div class="c" style="left:622.0px;top:620.17px">                            ),</div>
<div class="c" style="left:568.67px;top:637.08px;color:#999999">33</div>
<div class="c" style="left:622.0px;top:637.08px">                            PreConditionCheckMessage(</div>
<div class="c" style="left:568.67px;top:653.99px;color:#999999">34</div>
<div style="left:826.016px;top:652.53px;width:61px;height:12.6px;background:#f0f0f0;border-radius:5px;"></div>
<div class="t" style="left:831.04px;top:654.84px;font-size:9.2px;line-height:9.2px;color:#8e8e8e;font-weight:normal;transform:scaleX(0.9340);transform-origin:0 0;">messageKey:</div>
<div class="c" style="left:622.0px;top:653.99px">                                <span style="display:inline-block;width:67.2px;height:0"></span><span class="st">"custom.plugin.section.a.project.title.not.defined"</span>,</div>
<div class="c" style="left:568.67px;top:670.90px;color:#999999">35</div>
<div class="c" style="left:622.0px;top:670.90px">                                MessageType.<span class="en">ERROR</span>,</div>
<div class="c" style="left:568.67px;top:687.81px;color:#999999">36</div>
<div class="c" style="left:622.0px;top:687.81px">                                <span class="it">emptyList</span>()</div>
<div class="c" style="left:568.67px;top:704.72px;color:#999999">37</div>
<div class="c" style="left:622.0px;top:704.72px">                            )</div>
<svg style="left:613px;top:146.83px" width="8" height="10" viewBox="0 0 8 10"><path d="M0.5 0.5h7v6l-3.5 3.5l-3.5-3.5z" fill="#fff" stroke="#cfcfcf" stroke-width="1"/><path d="M2 5h4" stroke="#a8a8a8" stroke-width="1"/></svg>
<svg style="left:613px;top:299.02000000000004px" width="8" height="10" viewBox="0 0 8 10"><path d="M0.5 0.5h7v6l-3.5 3.5l-3.5-3.5z" fill="#fff" stroke="#cfcfcf" stroke-width="1"/><path d="M2 5h4" stroke="#a8a8a8" stroke-width="1"/></svg>
<svg style="left:613px;top:332.84000000000003px" width="8" height="10" viewBox="0 0 8 10"><path d="M0.5 0.5h7v6l-3.5 3.5l-3.5-3.5z" fill="#fff" stroke="#cfcfcf" stroke-width="1"/><path d="M2 5h4" stroke="#a8a8a8" stroke-width="1"/></svg>
<svg style="left:613px;top:535.7600000000001px" width="8" height="10" viewBox="0 0 8 10"><path d="M0.5 0.5h7v6l-3.5 3.5l-3.5-3.5z" fill="#fff" stroke="#cfcfcf" stroke-width="1"/><path d="M2 5h4" stroke="#a8a8a8" stroke-width="1"/></svg>
<svg style="left:613px;top:231.38px" width="8" height="10" viewBox="0 0 8 10"><path d="M0.5 9.5h7v-6l-3.5-3.5l-3.5 3.5z" fill="#fff" stroke="#cfcfcf" stroke-width="1"/><path d="M2 5h4" stroke="#a8a8a8" stroke-width="1"/></svg>
<svg style="left:613px;top:434.3px" width="8" height="10" viewBox="0 0 8 10"><path d="M0.5 9.5h7v-6l-3.5-3.5l-3.5 3.5z" fill="#fff" stroke="#cfcfcf" stroke-width="1"/><path d="M2 5h4" stroke="#a8a8a8" stroke-width="1"/></svg>
<svg style="left:590px;top:330.24px" width="12" height="12" viewBox="0 0 12 12"><circle cx="4.8" cy="6.8" r="3.9" fill="#8dc67f"/><rect x="4" y="5" width="1.5" height="4" fill="#3d6b33"/><path d="M9.8 1.5v9" stroke="#d9757a" stroke-width="1.3"/><path d="M8 3.5l1.8-2.3 1.8 2.3z" fill="#d9757a"/></svg>
<svg style="left:1352px;top:100.5px" width="14" height="13" viewBox="0 0 14 13"><path d="M7 0.5L13.5 12.5H0.5z" fill="#f2c12e"/><rect x="6.2" y="4" width="1.6" height="4.5" fill="#fff"/><rect x="6.2" y="9.5" width="1.6" height="1.6" fill="#fff"/></svg>
<div class="t" style="left:1368.13px;top:100.88px;font-size:13.6px;line-height:13.6px;color:#5a5f6a;font-weight:normal;transform:scaleX(0.9853);transform-origin:0 0;">2</div>
<svg style="left:1388px;top:102.5px" width="11" height="7" viewBox="0 0 11 7"><path d="M0.8 6.2L5.5 1.3L10.2 6.2" fill="none" stroke="#555" stroke-width="1.3"/></svg>
<svg style="left:1411px;top:104px" width="11" height="7" viewBox="0 0 11 7"><path d="M0.8 0.8L5.5 5.7L10.2 0.8" fill="none" stroke="#555" stroke-width="1.3"/></svg>
<div style="left:1419px;top:121px;width:10.5px;height:295px;background:rgba(0,0,0,0.125);"></div>
<div style="left:1415px;top:217px;width:15px;height:2.2px;background:#e3c01c;"></div>
<div style="left:1431px;top:92px;width:296px;height:31px;background:#f2f2f2;"></div>
<div style="left:1431px;top:123px;width:296px;height:1px;background:#d1d1d1;"></div>
<div style="left:1431px;top:124px;width:296px;height:587px;background:#ffffff;"></div>
<svg style="left:1678.5px;top:68.8px" width="14.5" height="14.5" viewBox="0 0 14.5 14.5"><path d="M6.54 0.03 L7.96 0.03 L8.77 2.25 L9.71 2.65 L11.85 1.65 L12.85 2.65 L11.85 4.79 L12.25 5.73 L14.47 6.54 L14.47 7.96 L12.25 8.77 L11.85 9.71 L12.85 11.85 L11.85 12.85 L9.71 11.85 L8.77 12.25 L7.96 14.47 L6.54 14.47 L5.73 12.25 L4.79 11.85 L2.65 12.85 L1.65 11.85 L2.65 9.71 L2.25 8.77 L0.03 7.96 L0.03 6.54 L2.25 5.73 L2.65 4.79 L1.65 2.65 L2.65 1.65 L4.79 2.65 L5.73 2.25Z" fill="#6e6e6e"/><circle cx="7.25" cy="7.25" r="2.47" fill="#f2f2f2"/></svg>
<div style="left:1708px;top:75px;width:14px;height:2px;background:#6e6e6e;"></div>
<svg style="left:1441px;top:100.5px" width="15" height="14.5" viewBox="0 0 15 14.5"><path d="M12.3 4.2A5.6 5.6 0 0 0 2.2 5.3" fill="none" stroke="#6e6e6e" stroke-width="1.8"/><path d="M0.6 1.2v5.6h5.6z" fill="#6e6e6e"/><path d="M2.5 10.3A5.6 5.6 0 0 0 12.6 9.2" fill="none" stroke="#6e6e6e" stroke-width="1.8"/><path d="M14.4 13.3V7.7H8.8z" fill="#6e6e6e"/></svg>
<svg style="left:1472px;top:102px" width="12" height="12" viewBox="0 0 12 12"><path d="M6 0v12M0 6h12" stroke="#6e6e6e" stroke-width="2"/></svg>
<div style="left:1501px;top:107px;width:12px;height:1.8px;background:#c4c4c4;"></div>
<div style="left:1525px;top:97px;width:1px;height:21px;background:#cfcfcf;"></div>
<svg style="left:1535px;top:101px" width="18" height="13" viewBox="0 0 18 13"><path d="M0.5 12.3C0.3 8.5 1.5 4.2 5.5 2.8C8 2 10.5 2.3 12.5 3.5C13.5 2.8 14.8 2.2 15 1.2C15.1 0.6 14.5 0.4 14.1 0.8L13.6 0.5C14.2 -0.3 16.3 -0.2 16.5 1.3C16.6 3 15.2 5 13.8 6.3C13.5 8 13.3 10 13.2 12.3H11C10.8 11 10.2 10.4 9.5 10.4C8.8 10.4 8.2 11 8 12.3H5.5C5.3 11 4.7 10.4 4 10.4C3.3 10.4 2.7 11 2.5 12.3Z" fill="#6e6e6e"/><path d="M6 5.5l2.5 2 2.5-1.5" fill="none" stroke="#f2f2f2" stroke-width="0.8"/></svg>
<div style="left:1562px;top:97px;width:1px;height:21px;background:#cfcfcf;"></div>
<svg style="left:1574.5px;top:100.5px" width="15" height="15" viewBox="0 0 15 15"><rect x="0" y="0.3" width="14.2" height="1.8" fill="#6e6e6e"/><rect x="0" y="12.7" width="14.2" height="1.8" fill="#6e6e6e"/><path d="M3.6 6.5L7.1 3.6 10.6 6.5zM3.6 8.2L7.1 11.2 10.6 8.2z" fill="#6e6e6e"/></svg>
<svg style="left:1603.5px;top:100.5px" width="15" height="15" viewBox="0 0 15 15"><rect x="0.3" y="6.4" width="13.8" height="1.8" fill="#6e6e6e"/><path d="M3.5 0.8h7.2L7.1 4.6zM3.5 14.4h7.2L7.1 10.6z" fill="#6e6e6e"/></svg>
<svg style="left:1632px;top:100.5px" width="19" height="17" viewBox="0 0 19 17"><path d="M0 0h6.5l2 2.3H16V12H0z" fill="#a4afb7"/><rect x="9" y="8.5" width="3.6" height="3.6" fill="#40b6e0"/><rect x="13.8" y="8.5" width="3.6" height="3.6" fill="#40b6e0"/><rect x="9" y="13" width="3.6" height="3.6" fill="#40b6e0"/><rect x="13.8" y="13" width="3.6" height="3.6" fill="#40b6e0"/></svg>
<div style="left:1658.5px;top:97px;width:1px;height:21px;background:#cfcfcf;"></div>
<svg style="left:1669px;top:100px" width="17" height="16" viewBox="0 0 17 16"><rect x="0" y="6" width="17" height="4" fill="#6e6e6e"/><path d="M6.5 15.5L10 0.5M10.5 15.5L14 0.5" stroke="#6e6e6e" stroke-width="1.3"/><path d="M7 6h3.8v4H7z" fill="#f2f2f2"/><path d="M7.7 10.2L9.4 3M11.7 10.2L13.4 3" stroke="#6e6e6e" stroke-width="1.3"/></svg>
<div style="left:1695.8px;top:97px;width:1px;height:21px;background:#cfcfcf;"></div>
<svg style="left:1715.5px;top:104px" width="9" height="6" viewBox="0 0 9 6"><path d="M0.5 0.5l2.5 2.5-2.5 2.5M5 0.5l2.5 2.5L5 5.5" fill="none" stroke="#888" stroke-width="0.9"/></svg>
<svg style="left:1434.7px;top:134.0px" width="12" height="8" viewBox="0 0 12 8"><path d="M0.8 1.3L5.8 6.3L10.8 1.3" fill="none" stroke="#8c8c8c" stroke-width="1.5"/></svg>
<svg style="left:1456.5px;top:133.5px" width="17" height="12" viewBox="0 0 17 12"><path d="M0.5 12.3C0.3 8.5 1.5 4.2 5.5 2.8C8 2 10.5 2.3 12.5 3.5C13.5 2.8 14.8 2.2 15 1.2C15.1 0.6 14.5 0.4 14.1 0.8L13.6 0.5C14.2 -0.3 16.3 -0.2 16.5 1.3C16.6 3 15.2 5 13.8 6.3C13.5 8 13.3 10 13.2 12.3H11C10.8 11 10.2 10.4 9.5 10.4C8.8 10.4 8.2 11 8 12.3H5.5C5.3 11 4.7 10.4 4 10.4C3.3 10.4 2.7 11 2.5 12.3Z" fill="#a4afb7"/></svg>
<div class="t" style="left:1476.05px;top:130.98px;font-size:13.6px;line-height:13.6px;color:#000;font-weight:normal;transform:scaleX(1.0267);transform-origin:0 0;">jems-custom-plugin</div>
<svg style="left:1457.5px;top:153.03px" width="8" height="12" viewBox="0 0 8 12"><path d="M1.3 0.8L6.3 5.8L1.3 10.8" fill="none" stroke="#8c8c8c" stroke-width="1.5"/></svg>
<svg style="left:1480px;top:153.03px" width="18" height="15" viewBox="0 0 18 15"><path d="M0 0h6.5l2 2.3H16V12H0z" fill="#a4afb7"/><circle cx="12.5" cy="11.5" r="4.8" fill="#fff"/><path d="M12.09 7.32 L12.91 7.32 L13.30 8.85 L13.81 9.06 L15.16 8.25 L15.75 8.84 L14.94 10.19 L15.15 10.70 L16.68 11.09 L16.68 11.91 L15.15 12.30 L14.94 12.81 L15.75 14.16 L15.16 14.75 L13.81 13.94 L13.30 14.15 L12.91 15.68 L12.09 15.68 L11.70 14.15 L11.19 13.94 L9.84 14.75 L9.25 14.16 L10.06 12.81 L9.85 12.30 L8.32 11.91 L8.32 11.09 L9.85 10.70 L10.06 10.19 L9.25 8.84 L9.84 8.25 L11.19 9.06 L11.70 8.85Z" fill="#40b6e0"/><circle cx="12.5" cy="11.5" r="1.3" fill="#fff"/></svg>
<div class="t" style="left:1499.22px;top:153.51px;font-size:13.6px;line-height:13.6px;color:#000;font-weight:normal;transform:scaleX(0.9097);transform-origin:0 0;">Tasks</div>
<svg style="left:1457.5px;top:175.56px" width="8" height="12" viewBox="0 0 8 12"><path d="M1.3 0.8L6.3 5.8L1.3 10.8" fill="none" stroke="#8c8c8c" stroke-width="1.5"/></svg>
<svg style="left:1480px;top:175.56px" width="18" height="15" viewBox="0 0 18 15"><path d="M0 0h6.5l2 2.3H16V12H0z" fill="#a4afb7"/><rect x="7" y="4" width="11" height="11" fill="#fff"/><rect x="8" y="7" width="2" height="8" fill="#59a869"/><rect x="11.5" y="5" width="2" height="10" fill="#a4afb7"/><rect x="15" y="6" width="2" height="9" fill="#40b6e0"/></svg>
<div class="t" style="left:1498.39px;top:176.04px;font-size:13.6px;line-height:13.6px;color:#000;font-weight:normal;transform:scaleX(0.9851);transform-origin:0 0;">Dependencies</div>
<svg style="left:1457.5px;top:198.09px" width="8" height="12" viewBox="0 0 8 12"><path d="M1.3 0.8L6.3 5.8L1.3 10.8" fill="none" stroke="#8c8c8c" stroke-width="1.5"/></svg>
<svg style="left:1480px;top:198.09px" width="18" height="15" viewBox="0 0 18 15"><path d="M0 0h6.5l2 2.3H16V12H0z" fill="#a4afb7"/><circle cx="12.5" cy="11.5" r="4.8" fill="#fff"/><path d="M12.09 7.32 L12.91 7.32 L13.30 8.85 L13.81 9.06 L15.16 8.25 L15.75 8.84 L14.94 10.19 L15.15 10.70 L16.68 11.09 L16.68 11.91 L15.15 12.30 L14.94 12.81 L15.75 14.16 L15.16 14.75 L13.81 13.94 L13.30 14.15 L12.91 15.68 L12.09 15.68 L11.70 14.15 L11.19 13.94 L9.84 14.75 L9.25 14.16 L10.06 12.81 L9.85 12.30 L8.32 11.91 L8.32 11.09 L9.85 10.70 L10.06 10.19 L9.25 8.84 L9.84 8.25 L11.19 9.06 L11.70 8.85Z" fill="#40b6e0"/><circle cx="12.5" cy="11.5" r="1.3" fill="#fff"/></svg>
<div class="t" style="left:1498.40px;top:198.57px;font-size:13.6px;line-height:13.6px;color:#000;font-weight:normal;transform:scaleX(0.9833);transform-origin:0 0;">Run Configurations</div>
<div style="left:0px;top:711px;width:1727px;height:1px;background:#c9c9c9;"></div>
<div style="left:0px;top:712px;width:1727px;height:30px;background:#f2f2f2;"></div>
<div style="left:0px;top:742px;width:862px;height:114px;background:#ffffff;"></div>
<div style="left:165px;top:712px;width:1px;height:30px;background:#fafafa;"></div>
<div style="left:841px;top:712px;width:1px;height:30px;background:#fafafa;"></div>
<div style="left:503px;top:712px;width:1px;height:30px;background:#fafafa;"></div>
<div style="left:862px;top:712px;width:1px;height:144px;background:#9a9a9a;"></div>
<div style="left:863px;top:742px;width:31px;height:114px;background:#f2f2f2;"></div>
<div style="left:894px;top:742px;width:1px;height:114px;background:#d5d5d5;"></div>
<div style="left:895px;top:742px;width:832px;height:114px;background:#ffffff;"></div>
<div class="t" style="left:2.23px;top:719.98px;font-size:13.6px;line-height:13.6px;color:#000;font-weight:normal;transform:scaleX(1.0399);transform-origin:0 0;">Debug</div>
<svg style="left:810.5px;top:718.8px" width="14.5" height="14.5" viewBox="0 0 14.5 14.5"><path d="M6.54 0.03 L7.96 0.03 L8.77 2.25 L9.71 2.65 L11.85 1.65 L12.85 2.65 L11.85 4.79 L12.25 5.73 L14.47 6.54 L14.47 7.96 L12.25 8.77 L11.85 9.71 L12.85 11.85 L11.85 12.85 L9.71 11.85 L8.77 12.25 L7.96 14.47 L6.54 14.47 L5.73 12.25 L4.79 11.85 L2.65 12.85 L1.65 11.85 L2.65 9.71 L2.25 8.77 L0.03 7.96 L0.03 6.54 L2.25 5.73 L2.65 4.79 L1.65 2.65 L2.65 1.65 L4.79 2.65 L5.73 2.25Z" fill="#6e6e6e"/><circle cx="7.25" cy="7.25" r="2.47" fill="#f2f2f2"/></svg>
<div style="left:840.5px;top:725.3px;width:14px;height:2px;background:#6e6e6e;"></div>
<div class="t" style="left:869.71px;top:719.98px;font-size:13.6px;line-height:13.6px;color:#000;font-weight:normal;transform:scaleX(0.9703);transform-origin:0 0;">Event Log</div>
<svg style="left:1678.5px;top:718.8px" width="14.5" height="14.5" viewBox="0 0 14.5 14.5"><path d="M6.54 0.03 L7.96 0.03 L8.77 2.25 L9.71 2.65 L11.85 1.65 L12.85 2.65 L11.85 4.79 L12.25 5.73 L14.47 6.54 L14.47 7.96 L12.25 8.77 L11.85 9.71 L12.85 11.85 L11.85 12.85 L9.71 11.85 L8.77 12.25 L7.96 14.47 L6.54 14.47 L5.73 12.25 L4.79 11.85 L2.65 12.85 L1.65 11.85 L2.65 9.71 L2.25 8.77 L0.03 7.96 L0.03 6.54 L2.25 5.73 L2.65 4.79 L1.65 2.65 L2.65 1.65 L4.79 2.65 L5.73 2.25Z" fill="#6e6e6e"/><circle cx="7.25" cy="7.25" r="2.47" fill="#f2f2f2"/></svg>
<div style="left:1708px;top:725.3px;width:14px;height:2px;background:#6e6e6e;"></div>
<div class="t" style="left:292.49px;top:759.98px;font-size:13.6px;line-height:13.6px;color:#999999;font-weight:normal;transform:scaleX(1.0250);transform-origin:0 0;">To debug your code, do one of the following:</div>
<div class="t" style="left:292.80px;top:782.68px;font-size:13.6px;line-height:13.6px;color:#999999;font-weight:normal;transform:scaleX(0.9925);transform-origin:0 0;">– Select &quot;Debug...&quot; in the editor context menu</div>
<div class="t" style="left:344.20px;top:807.68px;font-size:13.6px;line-height:13.6px;color:#999999;font-weight:normal;transform:scaleX(0.9909);transform-origin:0 0;">– Create a <span style="color:#2470b3;text-decoration:underline">run configuration</span></div>
<svg style="left:872px;top:751.5px" width="16" height="15" viewBox="0 0 16 15"><path d="M0.9 2.5h9.5M0.9 1.7v12.4h12.4V8.5" fill="none" stroke="#6e6e6e" stroke-width="1.8"/><path d="M4.5 6.5l3.2 3.2 7-7.5" fill="none" stroke="#6e6e6e" stroke-width="1.9"/></svg>
<svg style="left:873px;top:780px" width="12" height="16" viewBox="0 0 12 16"><rect x="0" y="2.2" width="12" height="1.8" fill="#6e6e6e"/><rect x="4" y="0.3" width="4" height="2" fill="#6e6e6e"/><path d="M1.2 5h9.6l-0.8 10.6H2z" fill="#6e6e6e"/></svg>
<div style="left:868px;top:807px;width:22px;height:1px;background:#d5d5d5;"></div>
<svg style="left:871.5px;top:817.5px" width="16" height="17" viewBox="0 0 16 17"><path d="M1.5 15.5L9 8" stroke="#6e6e6e" stroke-width="2.6"/><path d="M8 9.5a4.5 4.5 0 0 0 5.5-6l-2.5 2.5-2.2-0.3-0.3-2.2 2.5-2.5a4.5 4.5 0 0 0-6 5.5z" fill="#6e6e6e"/></svg>
<div class="t" style="left:900.04px;top:747.28px;font-size:13.6px;line-height:13.6px;color:#000;font-weight:normal;transform:scaleX(1.0304);transform-origin:0 0;">5/16/2021</div>
<div class="t" style="left:899.99px;top:769.88px;font-size:13.6px;line-height:13.6px;color:#000;font-weight:normal;transform:scaleX(0.9456);transform-origin:0 0;">9:42 PM</div>
<div class="t" style="left:958.28px;top:769.88px;font-size:13.6px;line-height:13.6px;color:#000;font-weight:bold;transform:scaleX(1.0041);transform-origin:0 0;">Kotlin:</div>
<div class="t" style="left:1003.27px;top:769.88px;font-size:13.6px;line-height:13.6px;color:#000;font-weight:normal;transform:scaleX(0.9824);transform-origin:0 0;">A new version 203-1.4.21-release-IJ5981.133-1 of the Kotlin plugin is available.</div>
<div class="t" style="left:1472.98px;top:769.88px;font-size:13.6px;line-height:13.6px;color:#2b2bd6;font-weight:normal;transform:scaleX(1.0464);transform-origin:0 0;text-decoration:underline">Install</div>
<div style="left:1713px;top:765px;width:14px;height:2px;background:#38c838;"></div>
<div style="left:370.5px;top:853.8px;width:10px;height:10px;border-radius:50%;background:#c9ced5"></div>
</body></html>
